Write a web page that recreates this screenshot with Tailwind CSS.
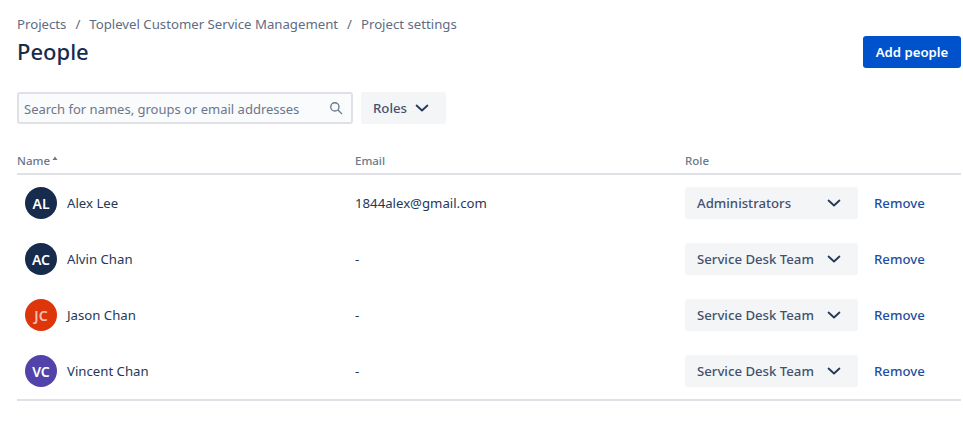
<!DOCTYPE html>
<html lang="en">
<head>
<meta charset="UTF-8">
<title>People</title>
<script src="https://cdn.jsdelivr.net/npm/@tailwindcss/browser@4"></script>
</head>
<body class="bg-white font-['Noto_Sans','Open_Sans',sans-serif] text-[#253858] overflow-hidden">
<div class="w-[963px] h-[431px] pl-[17px] pr-[2px] pt-[16px]">
  <!-- breadcrumbs -->
  <nav class="flex items-center h-[18px] text-[13.2px] text-[#5e6c84]">
    <span>Projects</span><span class="mx-[9px]">/</span>
    <span>Toplevel Customer Service Management</span><span class="mx-[9px]">/</span>
    <span>Project settings</span>
  </nav>
  <!-- title row -->
  <div class="flex items-center justify-between h-[36px]">
    <h1 class="text-[22px] font-medium leading-[36px] pb-[2px] text-[#172b4d]">People</h1>
    <button class="h-[32px] w-[98px] pt-[1px] rounded-[3px] bg-[#0052cc] text-white text-[13.2px] font-semibold">Add people</button>
  </div>
  <!-- filters -->
  <div class="flex items-center gap-[8px] mt-[22px]">
    <div class="flex items-center justify-between w-[336px] h-[32px] pl-[5px] pr-[6px] border-2 border-[#dfe1e6] rounded-[3px] bg-[#fafbfc]">
      <span class="pt-[4px] text-[13px] text-[#6b778c]">Search for names, groups or email addresses</span>
      <svg width="18" height="18" viewBox="0 0 24 24" fill="none" stroke="#6b778c" stroke-width="1.8"><circle cx="10.5" cy="10.5" r="5.5"/><path d="M15 15l4.5 4.5" stroke-linecap="round"/></svg>
    </div>
    <div class="flex items-center gap-[5px] h-[32px] pl-[12px] pr-[14px] rounded-[3px] bg-[#f4f5f7] text-[13.2px] font-medium text-[#42526e]">
      <span class="pt-[2px]">Roles</span>
      <svg width="20" height="20" viewBox="0 0 24 24" fill="none" stroke="#253858" stroke-width="2.2" stroke-linecap="round" stroke-linejoin="round"><path d="M5.5 9l6.5 6 6.5-6"/></svg>
    </div>
  </div>
  <!-- table -->
  <div class="w-[944px] mt-[24px]">
    <div class="grid grid-cols-[338px_330px_1fr] items-center h-[27px] border-b-2 border-[#dfe1e6] text-[11.5px] font-medium text-[#6b778c]">
      <div class="flex items-center gap-[2px]">Name<svg width="6" height="5" viewBox="0 0 6 5" class="mb-[4px]"><path d="M3 0.5L5.5 4H0.5z" fill="#6b778c"/></svg></div>
      <div>Email</div>
      <div>Role</div>
    </div>
    <div class="grid grid-cols-[338px_330px_1fr] items-center h-[56px] text-[13.2px]">
      <div class="flex items-center gap-[10px] pl-[8px]">
        <span class="flex items-center justify-center w-[32px] h-[32px] rounded-full bg-[#172b4d] text-white font-semibold text-[14px]">AL</span><span class="pt-[2px]">Alex Lee</span>
      </div>
      <div class="pt-[2px]">1844alex@gmail.com</div>
      <div class="flex items-center">
        <div class="flex items-center justify-between w-[173px] h-[32px] pl-[12px] pr-[14px] rounded-[3px] bg-[#f4f5f7] font-medium text-[#42526e] whitespace-nowrap"><span class="pt-[2px]">Administrators</span>
          <svg width="20" height="20" viewBox="0 0 24 24" fill="none" stroke="#253858" stroke-width="2.2" stroke-linecap="round" stroke-linejoin="round"><path d="M5.5 9l6.5 6 6.5-6"/></svg>
        </div>
        <a class="ml-[16px] pt-[2px] text-[#1d4f9e] font-medium">Remove</a>
      </div>
    </div>
    <div class="grid grid-cols-[338px_330px_1fr] items-center h-[56px] text-[13.2px]">
      <div class="flex items-center gap-[10px] pl-[8px]">
        <span class="flex items-center justify-center w-[32px] h-[32px] rounded-full bg-[#172b4d] text-white font-semibold text-[14px]">AC</span><span class="pt-[2px]">Alvin Chan</span>
      </div>
      <div class="pt-[2px]">-</div>
      <div class="flex items-center">
        <div class="flex items-center justify-between w-[173px] h-[32px] pl-[12px] pr-[14px] rounded-[3px] bg-[#f4f5f7] font-medium text-[#42526e] whitespace-nowrap"><span class="pt-[2px]">Service Desk Team</span>
          <svg width="20" height="20" viewBox="0 0 24 24" fill="none" stroke="#253858" stroke-width="2.2" stroke-linecap="round" stroke-linejoin="round"><path d="M5.5 9l6.5 6 6.5-6"/></svg>
        </div>
        <a class="ml-[16px] pt-[2px] text-[#1d4f9e] font-medium">Remove</a>
      </div>
    </div>
    <div class="grid grid-cols-[338px_330px_1fr] items-center h-[56px] text-[13.2px]">
      <div class="flex items-center gap-[10px] pl-[8px]">
        <span class="flex items-center justify-center w-[32px] h-[32px] rounded-full bg-[#de350b] text-white/70 font-semibold text-[14px]">JC</span><span class="pt-[2px]">Jason Chan</span>
      </div>
      <div class="pt-[2px]">-</div>
      <div class="flex items-center">
        <div class="flex items-center justify-between w-[173px] h-[32px] pl-[12px] pr-[14px] rounded-[3px] bg-[#f4f5f7] font-medium text-[#42526e] whitespace-nowrap"><span class="pt-[2px]">Service Desk Team</span>
          <svg width="20" height="20" viewBox="0 0 24 24" fill="none" stroke="#253858" stroke-width="2.2" stroke-linecap="round" stroke-linejoin="round"><path d="M5.5 9l6.5 6 6.5-6"/></svg>
        </div>
        <a class="ml-[16px] pt-[2px] text-[#1d4f9e] font-medium">Remove</a>
      </div>
    </div>
    <div class="grid grid-cols-[338px_330px_1fr] items-center h-[58px] text-[13.2px] border-b-2 border-[#dfe1e6]">
      <div class="flex items-center gap-[10px] pl-[8px]">
        <span class="flex items-center justify-center w-[32px] h-[32px] rounded-full bg-[#5243aa] text-white font-semibold text-[14px]">VC</span><span class="pt-[2px]">Vincent Chan</span>
      </div>
      <div class="pt-[2px]">-</div>
      <div class="flex items-center">
        <div class="flex items-center justify-between w-[173px] h-[32px] pl-[12px] pr-[14px] rounded-[3px] bg-[#f4f5f7] font-medium text-[#42526e] whitespace-nowrap"><span class="pt-[2px]">Service Desk Team</span>
          <svg width="20" height="20" viewBox="0 0 24 24" fill="none" stroke="#253858" stroke-width="2.2" stroke-linecap="round" stroke-linejoin="round"><path d="M5.5 9l6.5 6 6.5-6"/></svg>
        </div>
        <a class="ml-[16px] pt-[2px] text-[#1d4f9e] font-medium">Remove</a>
      </div>
    </div>
  </div>
</div>
</body>
</html>
